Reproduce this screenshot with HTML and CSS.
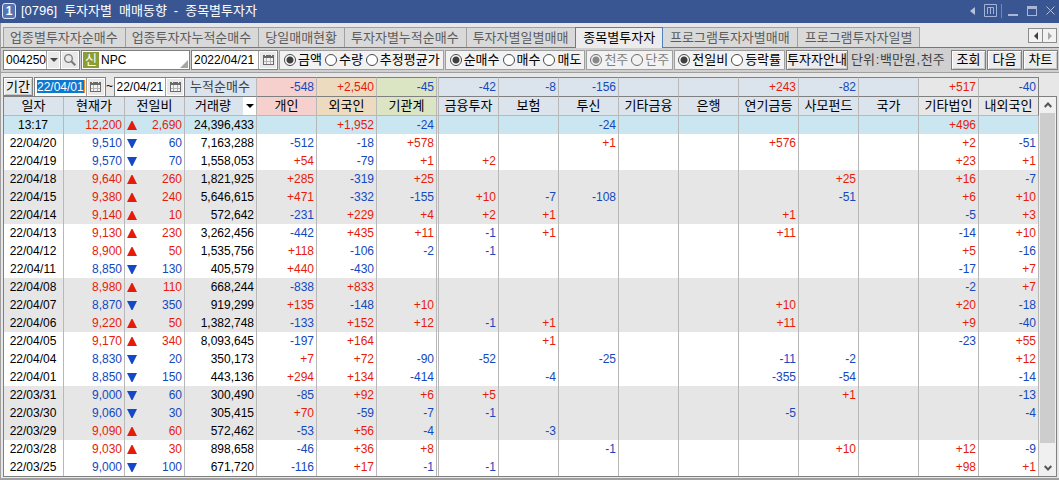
FILE: index.html
```html
<!DOCTYPE html>
<html lang="ko">
<head>
<meta charset="utf-8">
<title>[0796] 투자자별 매매동향 - 종목별투자자</title>
<link rel="stylesheet" href="styles.css">
</head>
<body>
<svg class="defs" aria-hidden="true">
  <symbol id="calendar" viewBox="0 0 11 10">
    <path d="M0 0h11v10H0z" fill="#6a6a6a"/>
    <path d="M2 0h1v1H2zM8 0h1v1H8z" fill="#f2f2f2"/>
    <path d="M1 3h9v6H1z" fill="#b4b4b4"/>
    <path d="M1 3h2v3H1zM4 3h3v3H4zM8 3h2v3H8zM1 7h2v2H1zM4 7h3v2H4zM8 7h2v2H8z" fill="#f2f2f2"/>
  </symbol>
</svg>
<div class="window">
  <header class="titlebar">
    <span class="badge">1</span>
    <h1><span>[0796]</span><span>투자자별</span><span>매매동향</span><span>-</span><span>종목별투자자</span></h1>
    <div class="window-controls">
      <button aria-label="이전"><svg width="5" height="8" viewBox="0 0 5 8"><path d="M5 0v8L0 4z" fill="#b4c2de"/></svg></button>
      <button aria-label="메뉴"><svg width="13" height="13" viewBox="0 0 13 13" fill="none" stroke="#a3b3d4"><path d="M.5.5h12v12H.5zM3.500 10V3.500h6V10M6.500 4v6"/></svg></button>
      <i class="divider"></i>
      <button aria-label="최소화"><svg width="10" height="10" viewBox="0 0 10 10"><path d="M0 8h10v2H0z" fill="#a9b7d6"/></svg></button>
      <button aria-label="최대화"><svg width="10" height="10" viewBox="0 0 10 10"><path d="M0 0h10v10H0zM1 3v6h8V3z" fill="#a9b7d6" fill-rule="evenodd"/></svg></button>
      <button aria-label="닫기"><svg width="9" height="9" viewBox="0 0 9 9" stroke="#b4c2de"><path d="M.5.5l8 8M8.500.5l-8 8"/></svg></button>
    </div>
  </header>

  <nav class="tabs" role="tablist">
    <button role="tab">업종별투자자순매수</button>
    <button role="tab">업종투자자누적순매수</button>
    <button role="tab">당일매매현황</button>
    <button role="tab">투자자별누적순매수</button>
    <button role="tab">투자자별일별매매</button>
    <button role="tab" class="active" aria-selected="true">종목별투자자</button>
    <button role="tab">프로그램투자자별매매</button>
    <button role="tab">프로그램투자자일별</button>
    <span class="tab-scroll">
      <button aria-label="왼쪽 탭"><svg width="4" height="8" viewBox="0 0 4 8"><path d="M4 0v8L0 4z" fill="#404040"/></svg></button>
      <button aria-label="오른쪽 탭"><svg width="4" height="8" viewBox="0 0 4 8"><path d="M0 0v8l4-4z" fill="#a8a8a8"/></svg></button>
    </span>
  </nav>

  <form class="toolbar">
    <div class="field code">
      <input type="text" value="004250" aria-label="종목코드">
      <button type="button" class="drop" aria-label="종목 목록"><svg width="8" height="4" viewBox="0 0 8 4"><path d="M0 0h8L4 4z" fill="#4a4a4a"/></svg></button>
      <button type="button" class="search" aria-label="종목 검색"><svg width="12" height="12" viewBox="0 0 12 12" fill="none" stroke="#7a7a7a"><circle cx="4.500" cy="4.500" r="3.800" stroke-width="1.300"/><path d="M7.300 7.300l4 4" stroke-width="2"/></svg></button>
    </div>
    <div class="field name">
      <span class="tag">신</span>
      <input type="text" value="NPC" aria-label="종목명">
      <svg class="grip" width="8" height="8" viewBox="0 0 8 8"><path d="M8 0v8H0z" fill="#a6a6a6"/></svg>
    </div>
    <div class="field date">
      <input type="text" value="2022/04/21" aria-label="기준일">
      <button type="button" aria-label="날짜 선택"><svg width="11" height="10"><use href="#calendar"/></svg></button>
    </div>
    <div class="group wide" role="radiogroup">
      <label><input type="radio" name="unit" checked>금액</label>
      <label><input type="radio" name="unit">수량</label>
      <label><input type="radio" name="unit">추정평균가</label>
    </div>
    <div class="group wide" role="radiogroup">
      <label><input type="radio" name="side" checked>순매수</label>
      <label><input type="radio" name="side">매수</label>
      <label><input type="radio" name="side">매도</label>
    </div>
    <div class="group" role="radiogroup">
      <label><input type="radio" name="lot" checked disabled>천주</label>
      <label><input type="radio" name="lot" disabled>단주</label>
    </div>
    <div class="group" role="radiogroup">
      <label><input type="radio" name="change" checked>전일비</label>
      <label><input type="radio" name="change">등락률</label>
    </div>
    <button type="button" class="push guide">투자자안내</button>
    <span class="unit"><span>단위</span><span>:</span><span>백만원</span><span>,</span><span>천주</span></span>
    <button type="button" class="push">조회</button>
    <button type="button" class="push">다음</button>
    <button type="button" class="push">차트</button>
  </form>

  <main class="grid">
    <table>
      <colgroup>
        <col class="w60"><col class="w61"><col class="w60"><col class="w72">
        <col class="w60"><col class="w60"><col class="w62">
        <col class="w60" span="10">
      </colgroup>
      <thead>
        <tr class="totals">
          <td colspan="3" class="period">
            <div class="period-row">
              <button type="button" class="push">기간</button>
              <div class="field date">
                <input type="text" class="selected" value="22/04/01" aria-label="시작일">
                <button type="button" aria-label="시작일 선택"><svg width="11" height="10"><use href="#calendar"/></svg></button>
              </div>
              <span class="tilde">~</span>
              <div class="field date">
                <input type="text" value="22/04/21" aria-label="종료일">
                <button type="button" aria-label="종료일 선택"><svg width="11" height="10"><use href="#calendar"/></svg></button>
              </div>
            </div>
          </td>
          <td class="sum-label">누적순매수</td>
          <td class="pink down">-548</td>
          <td class="tan up">+2,540</td>
          <td class="green down split">-45</td>
          <td class="down">-42</td>
          <td class="down">-8</td>
          <td class="down">-156</td>
          <td></td>
          <td></td>
          <td class="up">+243</td>
          <td class="down">-82</td>
          <td></td>
          <td class="plain up">+517</td>
          <td class="plain down">-40</td>
        </tr>
        <tr class="heads">
          <th>일자</th><th>현재가</th><th>전일비</th>
          <th><div class="sortable">거래량<button type="button" aria-label="열 선택"><svg width="8" height="4" viewBox="0 0 8 4"><path d="M0 0h8L4 4z"/></svg></button></div></th>
          <th class="pink">개인</th><th class="tan">외국인</th><th class="green split">기관계</th>
          <th>금융투자</th><th>보험</th><th>투신</th><th>기타금융</th><th>은행</th><th>연기금등</th><th>사모펀드</th><th>국가</th>
          <th class="plain">기타법인</th><th class="plain">내외국인</th>
        </tr>
      </thead>
      <tbody id="rows"></tbody>
    </table>
    <div class="scrollbar">
      <button type="button" aria-label="위로"><svg width="8" height="6" viewBox="0 0 8 6" fill="none" stroke="#555" stroke-width="2"><path d="M.7 5L4 1.500 7.300 5"/></svg></button>
      <div class="thumb"></div>
      <button type="button" aria-label="아래로"><svg width="8" height="6" viewBox="0 0 8 6" fill="none" stroke="#555" stroke-width="2"><path d="M.7 1L4 4.500 7.300 1"/></svg></button>
    </div>
  </main>
</div>
<script src="script.js"></script>
</body>
</html>
```

FILE: styles.css
```css
* { box-sizing: border-box; }

body {
  margin: 0;
  background: #e7e7e7;
  color: #000;
  font: 13px/18px "Liberation Sans", "Noto Sans CJK KR", sans-serif;
}

button, input {
  font: inherit;
  color: inherit;
  margin: 0;
  padding: 0;
  border: 0;
  border-radius: 0;
  background: none;
}

button {
  display: flex;
  align-items: center;
  justify-content: center;
  white-space: nowrap;
}

svg { display: block; flex: none; }
.defs { position: absolute; width: 0; height: 0; }

.window {
  min-height: 100vh;
  display: flex;
  flex-direction: column;
  border-left: 1px solid #a0a0a0;
  border-bottom: 2px solid #a0a0a0;
}

/* Title bar */
.titlebar {
  display: flex;
  align-items: center;
  gap: 5px;
  height: 23px;
  margin-left: -1px;
  padding: 0 4px 2px 2px;
  background: #395693;
  color: #fff;
}
.badge {
  width: 14px;
  height: 16px;
  border: 1px solid #dfe6f5;
  border-radius: 3px;
  background: #5674b4;
  font: bold 12px/14px "Liberation Sans", sans-serif;
  text-align: center;
}
.titlebar h1 {
  display: flex;
  gap: 7px;
  margin: 0;
  font-size: 13px;
  font-weight: normal;
}
.window-controls {
  display: flex;
  align-items: center;
  gap: 9px;
  margin-left: auto;
}
.divider { width: 1px; height: 14px; margin: 0 -3px 0 -5px; background: #7488b0; }

/* Tabs */
.tabs {
  display: flex;
  height: 25px;
  padding: 4px 2px 0;
  border-bottom: 1px solid #4f80bd;
}
.tabs > button {
  height: 20px;
  padding: 0 7px 0 6px;
  border-top: 1px solid #a0a0a0;
  border-left: 1px solid #a0a0a0;
  background: #d9d9d9;
  color: #5c5c5c;
}
.tabs > button:nth-last-child(2) { border-right: 1px solid #a0a0a0; }
.tabs > .active {
  height: 21px;
  border: 1px solid #4f80bd;
  border-bottom: 0;
  background: #ececec;
  color: #000;
}
.tabs > .active, .tabs > .active ~ button { padding: 0 7px; }
.tabs > .active + button { border-left: 0; }
.tab-scroll {
  display: flex;
  height: 15px;
  margin: 1px 0 0 auto;
  border: 1px solid #8c8c8c;
}
.tab-scroll button { width: 13px; background: #f2f2f2; }
.tab-scroll button + button { width: 14px; border-left: 1px solid #8c8c8c; }

/* Toolbar */
.toolbar {
  display: flex;
  align-items: center;
  gap: 1px;
  height: 25px;
  padding: 0 1px 0 2px;
  border-bottom: 1px solid #a0a0a0;
  background: #d0d0d0;
}
.toolbar > * { flex: none; }
.field {
  display: flex;
  height: 20px;
  border: 1px solid #808080;
  background: #fff;
}
.field input {
  flex: 1;
  min-width: 0;
  width: 0;
  padding-left: 2px;
  font-size: 12px;
}
.field button {
  flex: none;
  border: 1px solid #fff;
  box-shadow: -1px 0 #a0a0a0;
  background: #e9e9e9;
}
.code { width: 77px; }
.code .drop { width: 13px; }
.code .search { width: 18px; margin-left: 1px; }
.name { width: 109px; padding: 1px; }
.name .tag {
  width: 16px;
  height: 16px;
  line-height: 16px;
  background: #8c9d35;
  color: #fff;
  text-align: center;
}
.grip { align-self: flex-end; }
.toolbar > .date { width: 87px; }
.date button { width: 18px; }

.group {
  display: flex;
  align-items: center;
  gap: 3px;
  height: 20px;
  padding: 0 3px;
  border: 1px solid #a0a0a0;
  background: #f2f2f2;
  white-space: nowrap;
}
.group.wide { padding: 0 3px 0 4px; }
.group label { display: flex; align-items: center; gap: 2px; }
.group input {
  appearance: none;
  width: 12px;
  height: 12px;
  border: 1px solid #484848;
  border-radius: 50%;
  background: #fff;
}
.group input:checked { background: radial-gradient(circle, #404040 3px, #fff 4px); }
.group input:disabled { border-color: #6c6c6c; background-color: #f2f2f2; }
.group input:disabled:checked { background: radial-gradient(circle, #888 3px, #f2f2f2 4px); }
.group label:has(:disabled) { color: #808080; }

.push {
  height: 20px;
  min-width: 35px;
  border: 1px solid #808080;
  box-shadow: inset 1px 1px #fff, inset -1px -1px #c8c8c8;
  background: #ececec;
}
.guide { width: 62px; }
.unit { display: flex; margin: 0 auto 0 2px; color: #404040; white-space: nowrap; }
.unit span:nth-child(even) { width: 5px; text-align: center; }

/* Data grid */
.grid {
  display: flex;
  flex: 1;
  align-items: stretch;
  padding: 4px 2px 1px;
}
table {
  flex: 1;
  width: 100%;
  min-width: 0;
  table-layout: fixed;
  border-spacing: 0;
  border-left: 1px solid #808080;
  border-bottom: 1px solid #808080;
}
.w60 { width: 60px; }
.w61 { width: 61px; }
.w62 { width: 62px; }
.w72 { width: 72px; }

td, th {
  height: 18px;
  border-right: 1px solid #b8b8b8;
  font-weight: normal;
  line-height: 18px;
  white-space: nowrap;
}
td { padding: 0 2px 0 1px; font-size: 12px; text-align: right; }
td:last-child, th:last-child { border-right-color: #808080; }
tbody td:last-child { border-right-color: #b8b8b8; }
td.split, th.split { border-right: 3px double #b8b8b8; }

.totals td {
  height: 20px;
  border-top: 1px solid #808080;
  border-bottom: 1px solid #808080;
  background: #dbe3ed;
}
.totals .period { padding: 0; border-top: 0; border-right: 0; background: #e7e7e7; }
.totals .sum-label { color: #404040; font-size: 13px; text-align: center; }
.heads th { height: 19px; padding: 0; border-bottom: 1px solid #b8b8b8; background: #dbe3ed; }
.heads .pink, .totals .pink { background: #f5d0cc; }
.heads .tan, .totals .tan { background: #ecdbbe; }
.heads .green, .totals .green { background: #dbe5c4; }
.heads .plain, .totals .plain { background: #e7e7e7; }

.period-row { display: flex; align-items: stretch; height: 19px; margin-left: -1px; }
.period-row .push { width: 30px; min-width: 0; height: 19px; margin-right: 1px; font-size: 13px; }
.period-row .field { flex: 1; height: 19px; border-bottom: 0; }
.tilde { width: 8px; text-align: center; }
.field .selected {
  background:
    linear-gradient(#ff8c28, #ff8c28) 49px 2px / 1px 13px no-repeat,
    linear-gradient(#0f77d0, #0f77d0) 2px 2px / 47px 13px no-repeat;
  color: #fff;
}

.sortable { display: flex; align-items: center; height: 18px; padding-left: 10px; }
.sortable button { width: 13px; height: 18px; margin-left: auto; background: #fff; }

tbody td { background: #fff; }
tbody .shade td { background: #e6e6e6; }
tbody .today td { background: #c9e6f1; }
tbody td.day { text-align: center; }
.move { display: flex; align-items: center; justify-content: space-between; height: 18px; padding-left: 1px; }
.up { color: #e61c0a; }
.down { color: #1448be; }
.up svg { fill: #e61c0a; }
.down svg { fill: #1448c8; }

/* Scroll bar */
.scrollbar {
  display: flex;
  flex: none;
  flex-direction: column;
  width: 18px;
  margin-top: 19px;
  padding: 0 1px;
  border: 1px solid #808080;
  border-left: 0;
  background: #f0f0f0;
}
.scrollbar button { height: 16px; }
.thumb { flex: 1; margin-bottom: 17px; background: #cdcdcd; }
```

FILE: script.js
```js
// date | price | direction and change | volume | 13 investor columns
const data = `
13:17|12,200|+2,690|24,396,433||+1,952|-24|||-24||||||+496|
22/04/20|9,510|-60|7,163,288|-512|-18|+578|||+1|||+576|||+2|-51
22/04/19|9,570|-70|1,558,053|+54|-79|+1|+2||||||||+23|+1
22/04/18|9,640|+260|1,821,925|+285|-319|+25|||||||+25||+16|-7
22/04/15|9,380|+240|5,646,615|+471|-332|-155|+10|-7|-108||||-51||+6|+10
22/04/14|9,140|+10|572,642|-231|+229|+4|+2|+1||||+1|||-5|+3
22/04/13|9,130|+230|3,262,456|-442|+435|+11|-1|+1||||+11|||-14|+10
22/04/12|8,900|+50|1,535,756|+118|-106|-2|-1||||||||+5|-16
22/04/11|8,850|-130|405,579|+440|-430||||||||||-17|+7
22/04/08|8,980|+110|668,244|-838|+833||||||||||-2|+7
22/04/07|8,870|-350|919,299|+135|-148|+10||||||+10|||+20|-18
22/04/06|9,220|+50|1,382,748|-133|+152|+12|-1|+1||||+11|||+9|-40
22/04/05|9,170|+340|8,093,645|-197|+164|||+1|||||||-23|+55
22/04/04|8,830|-20|350,173|+7|+72|-90|-52||-25|||-11|-2|||+12
22/04/01|8,850|-150|443,136|+294|+134|-414||-4||||-355|-54|||-14
22/03/31|9,000|-60|300,490|-85|+92|+6|+5||||||+1|||-13
22/03/30|9,060|-30|305,415|+70|-59|-7|-1|||||-5||||-4
22/03/29|9,090|+60|572,462|-53|+56|-4||-3||||||||
22/03/28|9,030|+30|898,658|-46|+36|+8|||-1||||+10||+12|-9
22/03/25|9,000|-100|671,720|-116|+17|-1|-1||||||||+98|+1`.trim().split("\n");

const tone = value => value[0] === "+" ? "up" : value[0] === "-" ? "down" : "";
const arrow = dir => `<svg width="10" height="9" viewBox="0 0 10 9"><path d="${dir === "up" ? "M4.500 0h1L10 9H0z" : "M0 0h10L5.500 9h-1z"}"/></svg>`;

document.getElementById("rows").innerHTML = data.map((line, i) => {
  const [day, price, change, volume, ...flows] = line.split("|");
  const dir = tone(change);
  const band = i === 0 ? "today" : Math.floor(i / 3) % 2 ? "shade" : "";
  const cells = flows.map((v, n) => `<td class="${tone(v)}${n === 2 ? " split" : ""}">${v}</td>`).join("");
  return `<tr class="${band}"><td class="day">${day}</td><td class="${dir}">${price}</td>` +
    `<td class="${dir}"><div class="move">${arrow(dir)}${change.slice(1)}</div></td><td>${volume}</td>${cells}</tr>`;
}).join("");
```
